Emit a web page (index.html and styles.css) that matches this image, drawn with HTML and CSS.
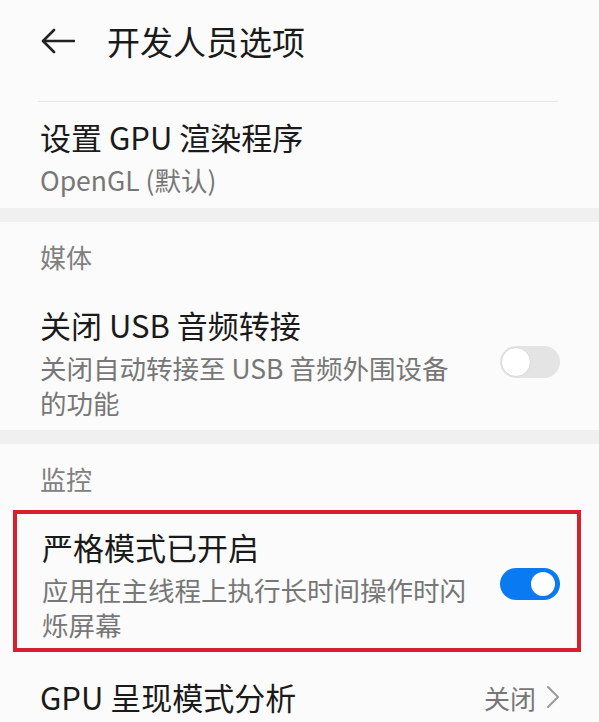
FILE: index.html
```html
<!DOCTYPE html>
<html>
  <head>
    <title>开发人员选项</title>
    <link rel="stylesheet" href="styles.css">
  </head>
  <body>
    <div class="topBar">
      <svg class="backArrow" width="34" height="26" viewBox="0 0 34 26">
        <path d="M33 13 H3 M13 2 L2 13 L13 24" fill="none" stroke="#222" stroke-width="2.6" stroke-linecap="round" stroke-linejoin="round"/>
      </svg>
      <h1 class="pageTitle">开发人员选项</h1>
    </div>

    <div class="divider"></div>

    <div class="settingRow firstRow">
      <div class="settingText">
        <div class="settingName">设置 GPU 渲染程序</div>
        <div class="settingDesc">OpenGL (默认)</div>
      </div>
    </div>

    <div class="band"></div>

    <div class="groupName">媒体</div>

    <div class="settingRow usbRow">
      <div class="settingText">
        <div class="settingName">关闭 USB 音频转接</div>
        <div class="settingDesc">关闭自动转接至 USB 音频外围设备<br>的功能</div>
      </div>
      <div class="toggle"></div>
    </div>

    <div class="band"></div>

    <div class="groupName">监控</div>

    <div class="highlightBox">
      <div class="settingRow">
        <div class="settingText">
          <div class="settingName">严格模式已开启</div>
          <div class="settingDesc">应用在主线程上执行长时间操作时闪<br>烁屏幕</div>
        </div>
        <div class="toggle on"></div>
      </div>
    </div>

    <div class="settingRow lastRow">
      <div class="settingName">GPU 呈现模式分析</div>
      <div class="settingValue">
        关闭
        <svg width="14" height="24" viewBox="0 0 14 24">
          <path d="M2 2 L12 12 L2 22" fill="none" stroke="#9a9a9a" stroke-width="2" stroke-linecap="round" stroke-linejoin="round"/>
        </svg>
      </div>
    </div>
  </body>
</html>
```

FILE: styles.css
```css
body {
  margin: 0;
  background-color: #fbfbfb;
  font-family: "Noto Sans CJK SC", "Noto Sans", sans-serif;
  color: #1a1a1a;
}

.topBar {
  height: 82px;
  display: flex;
  align-items: center;
  padding-left: 41px;
}

.backArrow {
  margin-right: 32px;
}

.pageTitle {
  margin: 0;
  font-size: 33px;
  font-weight: 400;
  line-height: 42px;
}

.divider {
  height: 1px;
  background-color: #e6e6e6;
  margin: 19px 41px 0 38px;
}

.settingRow {
  display: flex;
  align-items: center;
  padding: 0 39px 0 40px;
}

.firstRow {
  padding-top: 14px;
  padding-bottom: 11px;
}

.usbRow {
  padding-bottom: 10px;
}

.settingText {
  width: 436px;
}

.settingName {
  font-size: 31px;
  line-height: 42px;
}

.settingDesc {
  font-size: 26.5px;
  line-height: 35px;
  color: #777;
  margin-top: 4px;
}

.band {
  height: 14px;
  background-color: #f0f0f0;
}

.groupName {
  font-size: 26px;
  line-height: 35px;
  color: #808080;
  padding: 17px 40px 0 40px;
  margin-bottom: 30px;
}

.toggle {
  width: 60px;
  height: 32px;
  box-sizing: border-box;
  border-radius: 16px;
  background-color: #e4e4e4;
  margin-left: auto;
  position: relative;
}

/* knob sits over the track */
.toggle::after {
  content: "";
  position: absolute;
  left: 1px;
  top: 1px;
  width: 30px;
  height: 30px;
  box-sizing: border-box;
  border-radius: 50%;
  background-color: #fff;
  border: 1px solid #d8d8d8;
}

.toggle.on {
  background-color: #0a7af2;
}

.toggle.on::after {
  left: 28px;
  border: 3px solid #0a7af2;
}

.highlightBox {
  border: 4px solid #d71f2f;
  margin: 0 18px 0 13px;
  padding: 12px 0 6px 0;
}

.highlightBox .settingRow {
  padding: 0 17px 0 25px;
}

.groupName + .highlightBox {
  margin-top: -16px;
}

.lastRow {
  margin-top: 24px;
}

.settingValue {
  margin-left: auto;
  font-size: 26px;
  line-height: 35px;
  color: #777;
  display: flex;
  align-items: center;
  gap: 10px;
}
```
